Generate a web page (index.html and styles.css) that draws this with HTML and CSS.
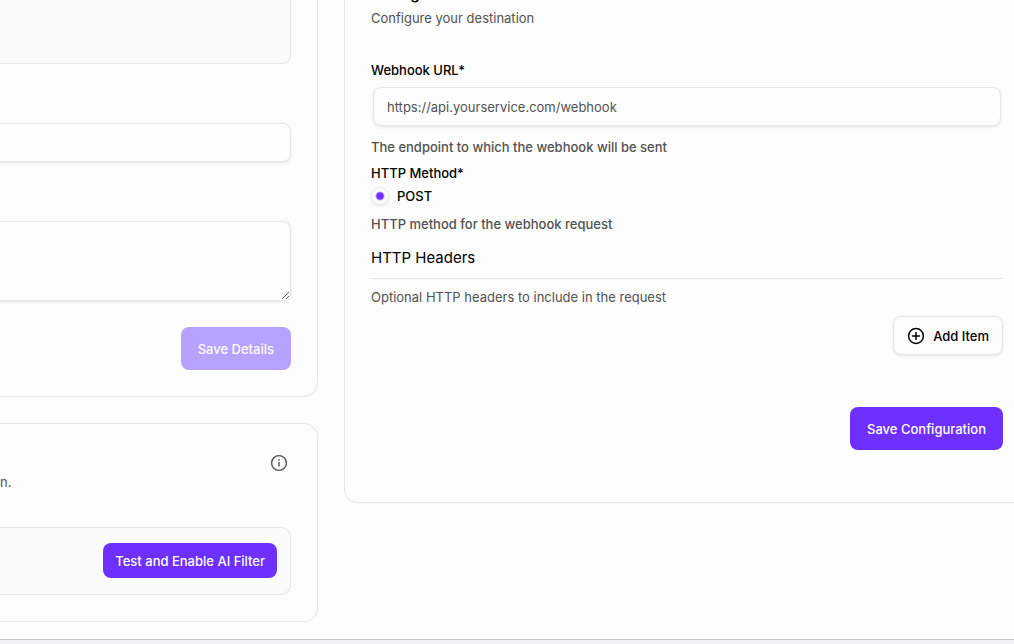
FILE: index.html
```
<!DOCTYPE html>
<html lang="en">
<head>
  <meta charset="UTF-8">
  <meta name="viewport" content="width=device-width, initial-scale=1">
  <title>Webhook</title>
  <link rel="stylesheet" href="styles.css">
</head>
<body>
  <main class="page">
    <div class="column">
      <section class="card details">
        <div class="summary"></div>
        <input class="field" type="text" aria-label="Name">
        <textarea class="field" aria-label="Description"></textarea>
        <button class="btn btn-primary" type="button" disabled>Save Details</button>
      </section>

      <section class="card filter">
        <div class="filter-head">
          <p class="text">n.</p>
          <button class="info" type="button" aria-label="Info">
            <svg viewBox="0 0 18 18" width="18" height="18" fill="none" stroke="currentColor" stroke-width="1.4">
              <circle cx="9" cy="9" r="7.4"/>
              <path d="M9 8v4.6M9 5.2v1.5"/>
            </svg>
          </button>
        </div>
        <div class="filter-box">
          <button class="btn btn-primary btn-small" type="button">Test and Enable AI Filter</button>
        </div>
      </section>
    </div>

    <form class="card config">
      <h2>Configuration</h2>
      <p class="text">Configure your destination</p>

      <label class="label url-label" for="url">Webhook URL*</label>
      <input class="field url" id="url" type="text" placeholder="https://api.yourservice.com/webhook">
      <p class="help">The endpoint to which the webhook will be sent</p>

      <fieldset class="method">
        <legend class="label">HTTP Method*</legend>
        <label class="option">
          <input type="radio" name="method" value="POST" checked>
          POST
        </label>
      </fieldset>
      <p class="help">HTTP method for the webhook request</p>

      <h3>HTTP Headers</h3>
      <p class="text">Optional HTTP headers to include in the request</p>

      <button class="btn btn-outline" type="button">
        <svg viewBox="0 0 18 18" width="18" height="18" fill="none" stroke="currentColor" stroke-width="1.5">
          <circle cx="9" cy="9" r="7.4"/>
          <path d="M9 5.5v7M5.5 9h7" stroke-linecap="round"/>
        </svg>
        Add Item
      </button>
      <button class="btn btn-primary save" type="button">Save Configuration</button>
    </form>
  </main>
</body>
</html>
```

FILE: styles.css
```
* {
  box-sizing: border-box;
}

body {
  margin: 0;
  background: #f1f1f4;
  color: #000;
  font-family: Inter, "Liberation Sans", sans-serif;
  font-size: 13px;
  line-height: 20px;
  overflow: hidden;
}

h2, h3, p {
  margin: 0;
}

button, input, textarea {
  font: inherit;
}

.page {
  display: grid;
  grid-template-columns: 318px minmax(0, 1fr);
  gap: 26px;
  align-items: start;
  padding-bottom: 17px;
  background: #fdfdfd;
  border-bottom: 1px solid #c8c8cb;
  box-shadow: 0 1px 3px rgba(0, 0, 0, 0.15);
}

.column {
  display: flex;
  flex-direction: column;
  gap: 26px;
}

.card {
  border: 1px solid #e6e6ea;
  border-radius: 14px;
}

/* left column */
.details, .filter {
  border-left: 0;
  border-top-left-radius: 0;
  border-bottom-left-radius: 0;
  padding: 26px 26px 26px 0;
}

.details {
  display: flex;
  flex-direction: column;
  border-top: 0;
  border-top-right-radius: 0;
  padding-top: 0;
}

.summary {
  height: 64px;
  margin-bottom: 59px;
  background: #fafafa;
  border: 1px solid #e6e6ea;
  border-width: 0 1px 1px 0;
  border-bottom-right-radius: 8px;
}

.field {
  display: block;
  height: 39px;
  padding: 0 13px;
  background: #fdfdfd;
  border: 1px solid #e6e6ea;
  border-radius: 8px;
  box-shadow: 0 1px 3px rgba(0, 0, 0, 0.1);
}

.field::placeholder {
  color: #525252;
  opacity: 1;
}

.details .field {
  border-left: 0;
  border-top-left-radius: 0;
  border-bottom-left-radius: 0;
}

.details textarea {
  height: 80px;
  margin: 59px 0 26px;
}

.btn {
  display: flex;
  align-items: center;
  justify-content: center;
  gap: 8px;
  align-self: flex-end;
  height: 43px;
  padding: 0 17px;
  border: 0;
  border-radius: 8px;
  font-weight: 500;
}

.btn-primary {
  background: #6e30ff;
  color: #fdfdfd;
}

.btn-primary:disabled {
  background: #b7a2ff;
}

.btn-small {
  height: 35px;
  padding: 0 12px;
}

.btn-outline {
  height: 39px;
  padding: 0 13px;
  background: #fdfdfd;
  color: #000;
  border: 1px solid #e6e6ea;
  box-shadow: 0 1px 3px rgba(0, 0, 0, 0.1);
}

.filter-head {
  display: flex;
  align-items: flex-start;
  justify-content: space-between;
  height: 77px;
  padding-right: 3px;
}

.filter-head .text {
  padding-top: 22px;
}

.info {
  display: flex;
  margin-top: 4px;
  padding: 0;
  border: 0;
  background: none;
  color: #525252;
}

.filter-box {
  display: flex;
  justify-content: flex-end;
  padding: 15px 13px 16px;
  background: #fbfbfb;
  border: 1px solid #e6e6ea;
  border-left: 0;
  border-radius: 0 10px 10px 0;
}

.text, .help {
  color: #525252;
}

.label, .help {
  font-weight: 500;
}

/* destination form */
.config {
  display: flex;
  flex-direction: column;
  margin-top: -16px;
  padding: 0 11px 52px 26px;
  border-width: 0 0 1px 1px;
  border-radius: 0 0 0 14px;
}

h2 {
  margin-bottom: 4px;
  font-size: 15px;
  font-weight: 600;
  line-height: 20px;
}

.url-label {
  margin-top: 32px;
}

.url {
  margin: 7px 2px 11px;
}

.method {
  margin: 6px 0 8px;
  padding: 0;
  border: 0;
}

.method .label {
  padding: 0;
}

.option {
  display: flex;
  align-items: center;
  gap: 8px;
  padding-top: 3px;
  font-weight: 500;
}

.option input {
  appearance: none;
  width: 18px;
  height: 18px;
  margin: 0;
  border: 1px solid #ececef;
  border-radius: 50%;
  background: radial-gradient(circle, #6e30ff 3px, #fdfdfd 5px);
  box-shadow: 0 1px 3px rgba(0, 0, 0, 0.12);
}

h3 {
  margin: 12px 0 8px;
  padding-bottom: 8px;
  border-bottom: 1px solid #e6e6ea;
  font-size: 15px;
  font-weight: 400;
  line-height: 24px;
}

.btn-outline {
  margin-top: 9px;
}

.save {
  margin-top: 52px;
}
```
